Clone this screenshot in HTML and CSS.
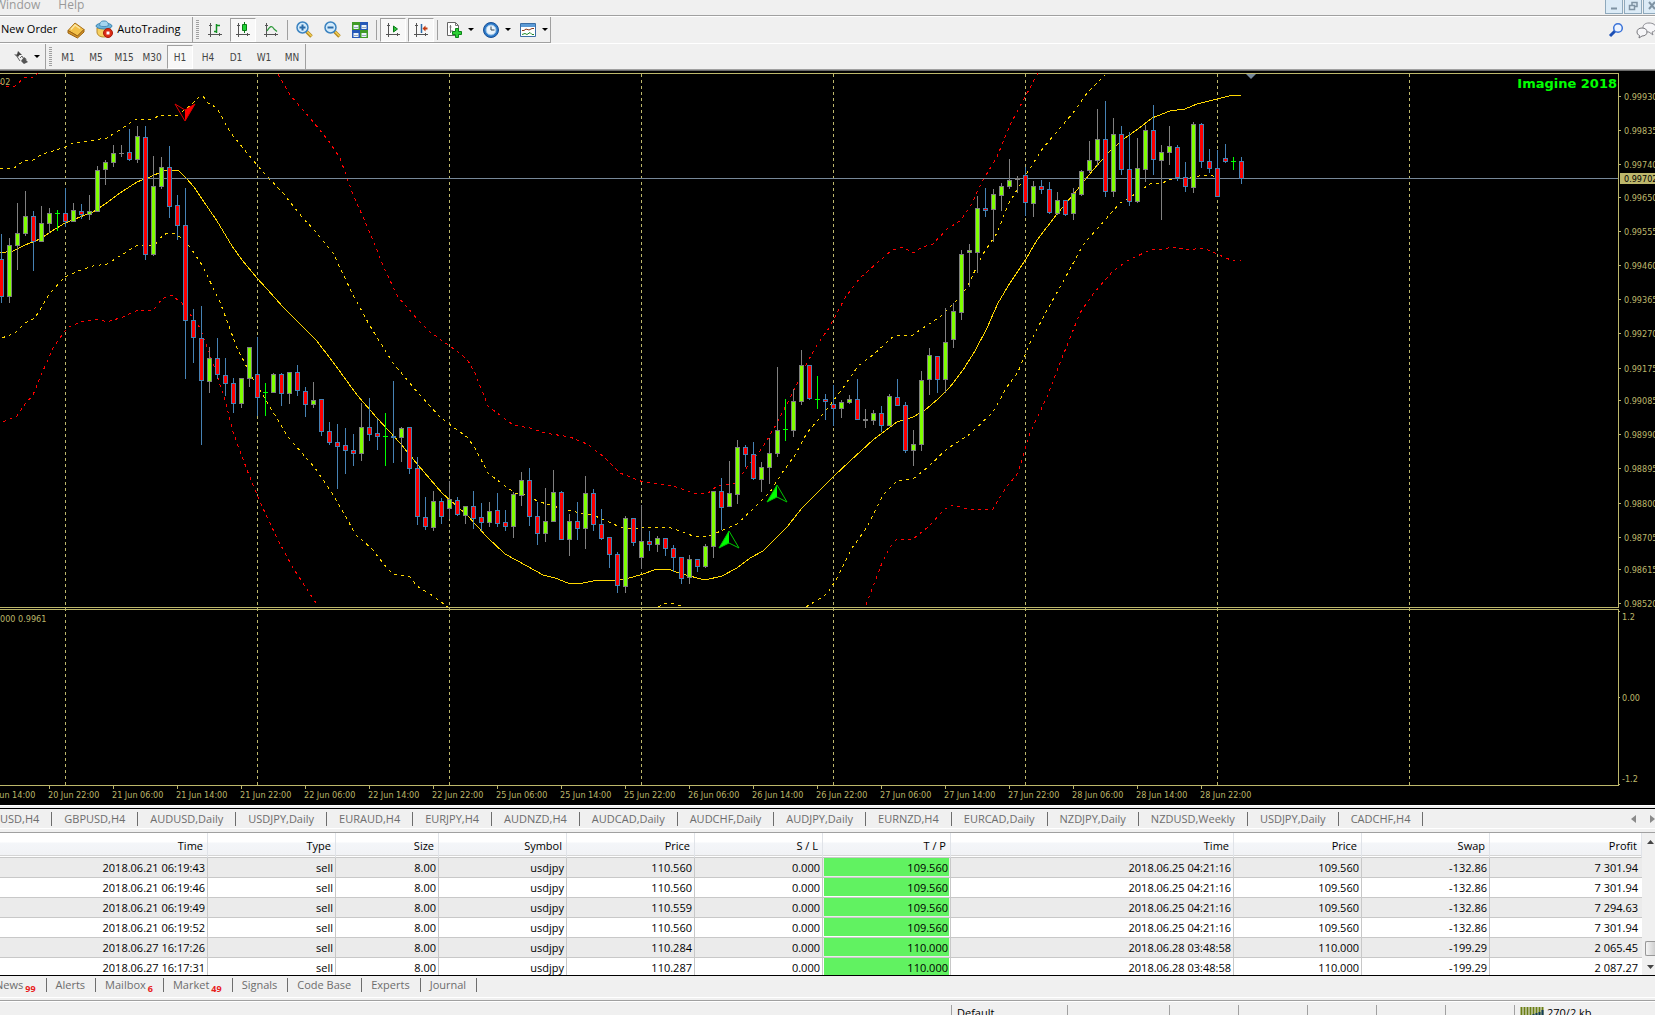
FILE: index.html
```html
<!DOCTYPE html>
<html lang="en">
<head>
    <meta charset="UTF-8">
    <meta name="viewport" content="width=device-width, initial-scale=1.0">
    <title>Trading Terminal</title>
    <link rel="stylesheet" href="styles.css">
</head>
<body>
    <div class="menubar">
        <nav class="menu">
            <button type="button">Window</button>
            <button type="button">Help</button>
        </nav>
        <div class="window-buttons">
            <button type="button" aria-label="Minimize"><svg width="16" height="14"><path d="M5 8.5h6" stroke="#7f93a3" stroke-width="2"/></svg></button>
            <button type="button" aria-label="Restore"><svg width="16" height="14"><path d="M4.500 5.500h5v4h-5zM7 5V2.500h5v4h-2" fill="none" stroke="#7f93a3" stroke-width="1.500"/></svg></button>
            <button type="button" aria-label="Close"><svg width="16" height="14"><path d="M5 2l6 7M11 2l-6 7" stroke="#7f93a3" stroke-width="2"/></svg></button>
        </div>
    </div>

    <div class="toolbars">
        <div class="toolbar">
            <div class="group first">
                <button type="button" class="text-btn">New Order</button>
                <button type="button" class="icon-btn book" aria-label="MetaEditor">
                    <svg width="18" height="18"><path d="M1 9.500L8 2l9 6.500-6.500 6.500z" fill="#f3c14a" stroke="#a8701a"/><path d="M1 9.500v2.500l9.500 5 6.500-6V8.500l-6.500 6.500z" fill="#d9982a" stroke="#9a6210"/><path d="M4 8.500l4-4.500 5 3.500" fill="none" stroke="#fbe6a4" stroke-width="1.500"/></svg>
                </button>
                <button type="button" class="text-btn auto">
                    <svg width="18" height="18"><path d="M2 8h13v4c0 3-3 5-6.500 5S2 15 2 12z" fill="#f6d061" stroke="#b8892a"/><ellipse cx="9" cy="6" rx="8" ry="3" fill="#6db4dd" stroke="#3c85b2"/><path d="M4.500 5.500C5 2 6 1 9 1s4 1 4.500 4.500c-2 1.500-7 1.500-9 0z" fill="#a5d5ef" stroke="#4b91bb"/><circle cx="13" cy="13" r="4.500" fill="#dc2c15" stroke="#a61b0a"/><path d="M11.500 11.500h3v3h-3z" fill="#fff"/></svg>
                    AutoTrading
                </button>
            </div>
            <div class="group">
                <span class="grip"></span>
                <button type="button" class="icon-btn" aria-label="Bar Chart">
                    <svg width="16" height="16"><path d="M3.500 1v14M1 12.500h14M2 3.500h3M12.500 11v3" stroke="#555" fill="none"/><path d="M9.500 2v9M10 3.500h3M7 9.500h2" stroke="#129023" fill="none" stroke-width="1.500"/></svg>
                </button>
                <button type="button" class="icon-btn pressed" aria-label="Candlesticks">
                    <svg width="16" height="16"><path d="M3.500 1v14M1 12.500h14M2 3.500h3M12.500 11v3" stroke="#555" fill="none"/><path d="M9.500 0v11" stroke="#0a7a16"/><path d="M7.500 2.500h4v6h-4z" fill="#1fd235" stroke="#0a7a16"/></svg>
                </button>
                <button type="button" class="icon-btn" aria-label="Line Chart">
                    <svg width="16" height="16"><path d="M3.500 1v14M1 12.500h14M2 3.500h3M12.500 11v3" stroke="#555" fill="none"/><path d="M4 9c3-5 5-6 7-2l3 2.500" stroke="#2f9a3c" fill="none" stroke-width="1.200"/></svg>
                </button>
                <span class="sep"></span>
                <button type="button" class="icon-btn" aria-label="Zoom In">
                    <svg width="17" height="17"><path d="M10.500 10.500l5 5" stroke="#b58a20" stroke-width="3.500"/><path d="M11 10.500l4.500 4.500" stroke="#f2cf55" stroke-width="1.500"/><circle cx="6.500" cy="6.500" r="5.500" fill="#d3ebfb" stroke="#3b83c0" stroke-width="1.500"/><path d="M3.500 6.500h6M6.500 3.500v6" stroke="#2a6ba8" stroke-width="2"/></svg>
                </button>
                <button type="button" class="icon-btn" aria-label="Zoom Out">
                    <svg width="17" height="17"><path d="M10.500 10.500l5 5" stroke="#b58a20" stroke-width="3.500"/><path d="M11 10.500l4.500 4.500" stroke="#f2cf55" stroke-width="1.500"/><circle cx="6.500" cy="6.500" r="5.500" fill="#d3ebfb" stroke="#3b83c0" stroke-width="1.500"/><path d="M3.500 6.500h6" stroke="#2a6ba8" stroke-width="2"/></svg>
                </button>
                <button type="button" class="icon-btn" aria-label="Tile Windows">
                    <svg width="16" height="16"><path d="M0 0h8v8H0zM8 8h8v8H8z" fill="#3f9a26"/><path d="M8 0h8v8H8zM0 8h8v8H0z" fill="#2458b8"/><path d="M1.500 3h5v4h-5zM9.500 3h5v4h-5zM1.500 11h5v4h-5zM9.500 11h5v4h-5z" fill="#eaf3fa"/><path d="M2 5.500h4M10 5.500h4M2 13.500h4M10 13.500h4" stroke="#9ab"/></svg>
                </button>
                <span class="sep"></span>
                <button type="button" class="icon-btn pressed" aria-label="Auto Scroll">
                    <svg width="16" height="16"><path d="M3.500 1v14M1 12.500h14M2 3.500h3M12.500 11v3" stroke="#555" fill="none"/><path d="M8.500 4v6l4-3z" fill="#2cc03a" stroke="#0a7a16"/></svg>
                </button>
                <button type="button" class="icon-btn pressed" aria-label="Chart Shift">
                    <svg width="16" height="16"><path d="M3.500 1v14M1 12.500h14M2 3.500h3M12.500 11v3" stroke="#555" fill="none"/><path d="M8.500 2v9" stroke="#2a6ba8" stroke-width="1.500"/><path d="M9.500 6.500l3-3v2h2v2h-2v2z" fill="#c23c12"/></svg>
                </button>
                <span class="sep"></span>
                <button type="button" class="drop-btn" aria-label="Indicators">
                    <svg width="18" height="18"><path d="M2.500 1.500h8l3 3v10h-11z" fill="#fff" stroke="#666"/><path d="M10.500 1.500v3h3M5.500 4v8M4.500 6h2M5 10h3" fill="none" stroke="#777"/><path d="M10.500 7.500h3v3h3v3h-3v3h-3v-3h-3v-3h3z" fill="#2ccf35" stroke="#0c8418"/></svg>
                    <span class="caret"></span>
                </button>
                <button type="button" class="drop-btn" aria-label="Periods">
                    <svg width="18" height="18"><circle cx="9" cy="9" r="7.500" fill="#2a78c8" stroke="#1a4f94"/><circle cx="9" cy="9" r="5" fill="#eaf4fc" stroke="#9cc4e6"/><path d="M9 5.500V9h3.500" fill="none" stroke="#345"/></svg>
                    <span class="caret"></span>
                </button>
                <button type="button" class="drop-btn" aria-label="Templates">
                    <svg width="18" height="18"><path d="M1.500 2.500h15v13h-15z" fill="#fff" stroke="#3b6ea5"/><path d="M2 3h14v3H2z" fill="#5c9bd6"/><path d="M3 9.500h2l2-1.500 3 1 3-1.500h2" fill="none" stroke="#8a3a1a"/><path d="M3 13.500l3-1 2 1 3-2 2 2h2" fill="none" stroke="#1e8a2a"/></svg>
                    <span class="caret"></span>
                </button>
            </div>
            <div class="tools-right">
                <button type="button" aria-label="Search"><svg width="16" height="16"><path d="M2 14l5-5" stroke="#1c4fb4" stroke-width="3"/><circle cx="10" cy="6" r="4.300" fill="#edf4ff" stroke="#3a72d8" stroke-width="1.500"/></svg></button>
                <button type="button" aria-label="Chat"><svg width="20" height="18"><path d="M13 2c4 0 7 2 7 4.500S18 11 16 11l1 3-4-3c-4 0-6-2-6-4.500S9 2 13 2z" fill="#f6f6f8" stroke="#8a8a90"/><path d="M6 7c3 0 5 1.500 5 4s-2 4-5 4l-3 2 .5-2.500C2 14 1 12.500 1 11c0-2.500 2-4 5-4z" fill="#f6f6f8" stroke="#77777c"/></svg></button>
            </div>
        </div>
        <div class="toolbar">
            <div class="group objects">
                <button type="button" class="drop-btn" aria-label="Arrows">
                    <svg width="16" height="16"><path d="M5 2l4 4H6.500L5 8 1 5.500h3z" fill="#444"/><path d="M3 6l4 6M7 9l2-2 1 2" stroke="#666" fill="none"/><path d="M11 8l3 2.500h-1.500L15 13l-4 2-3-3z" fill="#555"/></svg>
                    <span class="caret"></span>
                </button>
            </div>
            <div class="group periods">
                <span class="grip"></span>
                <button type="button" class="icon-btn">M1</button>
                <button type="button" class="icon-btn">M5</button>
                <button type="button" class="icon-btn">M15</button>
                <button type="button" class="icon-btn">M30</button>
                <button type="button" class="icon-btn pressed">H1</button>
                <button type="button" class="icon-btn">H4</button>
                <button type="button" class="icon-btn">D1</button>
                <button type="button" class="icon-btn">W1</button>
                <button type="button" class="icon-btn">MN</button>
            </div>
        </div>
    </div>

    <main class="chart">
        <svg id="plot" class="plot" role="img" aria-label="Price chart"></svg>
        <svg id="axis" class="axis" role="img" aria-label="Price scale"></svg>
        <div class="signature">Imagine 2018</div>
    </main>

    <div class="chart-tabs">
        <div class="tabs">
            <button type="button">USD,H4</button>
            <button type="button">GBPUSD,H4</button>
            <button type="button">AUDUSD,Daily</button>
            <button type="button">USDJPY,Daily</button>
            <button type="button">EURAUD,H4</button>
            <button type="button">EURJPY,H4</button>
            <button type="button">AUDNZD,H4</button>
            <button type="button">AUDCAD,Daily</button>
            <button type="button">AUDCHF,Daily</button>
            <button type="button">AUDJPY,Daily</button>
            <button type="button">EURNZD,H4</button>
            <button type="button">EURCAD,Daily</button>
            <button type="button">NZDJPY,Daily</button>
            <button type="button">NZDUSD,Weekly</button>
            <button type="button">USDJPY,Daily</button>
            <button type="button">CADCHF,H4</button>
        </div>
        <div class="tab-scroll">
            <button type="button" aria-label="Scroll left"><svg width="5" height="8"><path d="M5 0v8L0 4z" fill="#8a8a8a"/></svg></button>
            <button type="button" aria-label="Scroll right"><svg width="5" height="8"><path d="M0 0v8l5-4z" fill="#8a8a8a"/></svg></button>
        </div>
    </div>

    <section class="terminal">
        <div class="history">
            <table>
                <colgroup>
                    <col class="c-open"><col class="c-std"><col class="c-size"><col class="c-std"><col class="c-std"><col class="c-std"><col class="c-std"><col class="c-close"><col class="c-std"><col class="c-std"><col>
                </colgroup>
                <thead>
                    <tr><th>Time</th><th>Type</th><th>Size</th><th>Symbol</th><th>Price</th><th>S / L</th><th>T / P</th><th>Time</th><th>Price</th><th>Swap</th><th>Profit</th></tr>
                </thead>
                <tbody>
                    <tr><td>2018.06.21 06:19:43</td><td>sell</td><td>8.00</td><td>usdjpy</td><td>110.560</td><td>0.000</td><td class="hit"><span>109.560</span></td><td>2018.06.25 04:21:16</td><td>109.560</td><td>-132.86</td><td>7 301.94</td></tr>
                    <tr><td>2018.06.21 06:19:46</td><td>sell</td><td>8.00</td><td>usdjpy</td><td>110.560</td><td>0.000</td><td class="hit"><span>109.560</span></td><td>2018.06.25 04:21:16</td><td>109.560</td><td>-132.86</td><td>7 301.94</td></tr>
                    <tr><td>2018.06.21 06:19:49</td><td>sell</td><td>8.00</td><td>usdjpy</td><td>110.559</td><td>0.000</td><td class="hit"><span>109.560</span></td><td>2018.06.25 04:21:16</td><td>109.560</td><td>-132.86</td><td>7 294.63</td></tr>
                    <tr><td>2018.06.21 06:19:52</td><td>sell</td><td>8.00</td><td>usdjpy</td><td>110.560</td><td>0.000</td><td class="hit"><span>109.560</span></td><td>2018.06.25 04:21:16</td><td>109.560</td><td>-132.86</td><td>7 301.94</td></tr>
                    <tr><td>2018.06.27 16:17:26</td><td>sell</td><td>8.00</td><td>usdjpy</td><td>110.284</td><td>0.000</td><td class="hit"><span>110.000</span></td><td>2018.06.28 03:48:58</td><td>110.000</td><td>-199.29</td><td>2 065.45</td></tr>
                    <tr><td>2018.06.27 16:17:31</td><td>sell</td><td>8.00</td><td>usdjpy</td><td>110.287</td><td>0.000</td><td class="hit"><span>110.000</span></td><td>2018.06.28 03:48:58</td><td>110.000</td><td>-199.29</td><td>2 087.27</td></tr>
                </tbody>
            </table>
        </div>
        <div class="scrollbar">
            <button type="button" aria-label="Scroll up"><svg width="7" height="4"><path d="M0 4h7L3.500 0z" fill="#444"/></svg></button>
            <span class="thumb"></span>
            <button type="button" aria-label="Scroll down"><svg width="7" height="4"><path d="M0 0h7L3.500 4z" fill="#444"/></svg></button>
        </div>
    </section>

    <div class="terminal-tabs tabs">
        <button type="button">News<span class="count">99</span></button>
        <button type="button">Alerts</button>
        <button type="button">Mailbox<span class="count">6</span></button>
        <button type="button">Market<span class="count">49</span></button>
        <button type="button">Signals</button>
        <button type="button">Code Base</button>
        <button type="button">Experts</button>
        <button type="button">Journal</button>
    </div>

    <footer class="statusbar">
        <span class="profile">Default</span>
        <span class="s-wide"></span>
        <span class="s-std"></span>
        <span class="s-std"></span>
        <span class="s-std"></span>
        <span class="s-std"></span>
        <span class="s-std"></span>
        <span class="traffic">
            <svg width="24" height="14"><path d="M1.500 0v14M4.500 0v14M7.500 0v14M10.500 0v14M13.500 0v14M16.500 0v14M19.500 0v14M22.500 0v14" stroke="#6b7f14" stroke-width="2"/><path d="M7.500 9v5M10.500 8v6M13.500 7v7M16.500 6v8M19.500 5v9M22.500 3v11" stroke="#123c5c" stroke-width="2"/></svg>
            270/2 kb
        </span>
    </footer>

    <script src="chart.js"></script>
</body>
</html>
```
FILE: styles.css
```css
* {
    box-sizing: border-box;
}
body {
    margin: 0;
    height: 100vh;
    overflow: hidden;
    background-color: #f0f0f0;
    color: #000;
    font-family: "Open Sans", "Noto Sans", sans-serif;
    font-size: 11px;
    line-height: 16px;
}
button {
    margin: 0;
    padding: 0;
    border: none;
    background: none;
    color: inherit;
    font: inherit;
    white-space: nowrap;
}
svg {
    display: block;
}

/* menu and toolbars */
.menubar {
    display: flex;
    justify-content: space-between;
    height: 16px;
    border-bottom: 1px solid #a0a0a0;
    overflow: hidden;
}
.menu {
    display: flex;
    align-items: center;
    gap: 18px;
    height: 10px;
    margin-left: -5px;
    color: #999;
    font-size: 12px;
}
.window-buttons {
    display: flex;
    gap: 1px;
    margin-right: -6px;
}
.window-buttons button {
    width: 18px;
    height: 14px;
    border: 1px solid #8fa9bc;
    border-top: none;
    background-color: #dcebf6;
}
.toolbars {
    border-top: 1px solid #fff;
    border-bottom: 1px solid #a0a0a0;
}
.toolbar {
    display: flex;
    height: 26px;
}
.toolbar + .toolbar {
    border-top: 1px solid #fff;
}
.group {
    display: flex;
    align-items: center;
    gap: 2px;
    height: 26px;
    border-right: 1px solid #a0a0a0;
    border-bottom: 1px solid #a0a0a0;
}
.toolbar + .toolbar .group {
    border-bottom: none;
    height: 25px;
}
.group.first {
    width: 193px;
    padding-left: 1px;
    gap: 6px;
}
.text-btn {
    padding-bottom: 2px;
}
.auto {
    display: flex;
    align-items: center;
    gap: 4px;
}
.objects {
    width: 46px;
    padding-left: 9px;
}
.grip {
    width: 3px;
    height: 20px;
    margin: 0 1px 0 3px;
    background: repeating-linear-gradient(#a0a0a0 0 1px, #f0f0f0 1px 2px);
}
.icon-btn {
    display: flex;
    align-items: center;
    justify-content: center;
    width: 26px;
    height: 24px;
}
.pressed {
    border: 1px solid #fff;
    border-top-color: #a0a0a0;
    border-left-color: #a0a0a0;
    background-color: #f8f8f8;
}
.sep {
    width: 1px;
    height: 20px;
    margin: 0 1px;
    background-color: #a0a0a0;
}
.drop-btn {
    display: flex;
    align-items: center;
    gap: 5px;
    width: 35px;
    height: 24px;
    padding-left: 4px;
}
.caret {
    border: 3px solid transparent;
    border-top-color: #000;
    border-bottom: none;
}
.periods {
    color: #444;
    font-family: "DejaVu Sans Condensed", "Open Sans", sans-serif;
    font-size: 10px;
}
.periods .icon-btn {
    padding-top: 2px;
}
.tools-right {
    display: flex;
    align-items: center;
    gap: 12px;
    margin-left: auto;
    margin-right: -1px;
}

/* chart */
.chart {
    position: relative;
    display: flex;
    height: 735px;
    background-color: #000;
}
.plot {
    flex: 1;
    min-width: 0;
    height: 735px;
}
.axis {
    width: 37px;
    height: 735px;
}
.plot text,
.axis text {
    fill: #bdb76b;
    font-family: "DejaVu Sans Condensed", "Open Sans", sans-serif;
    font-size: 9px;
}
.axis text.current {
    fill: #000;
}
.signature {
    position: absolute;
    top: 6px;
    right: 38px;
    color: #0f0;
    font-family: "DejaVu Sans", sans-serif;
    font-size: 13px;
    font-weight: 900;
}

/* tab strips */
.tabs {
    display: flex;
    align-items: center;
    color: #6d6d6d;
}
.tabs button {
    height: 14px;
    padding: 0 12px;
    border-right: 1px solid #6d6d6d;
    line-height: 14px;
}
.tabs button:first-child {
    padding-left: 0;
}
.chart-tabs {
    display: flex;
    justify-content: space-between;
    height: 28px;
    padding: 5px 0 5px;
    border-top: 1px solid #fff;
    border-bottom: 1px solid #a0a0a0;
    background: linear-gradient(#000, #000) 0 2px / 100% 1px no-repeat, linear-gradient(#fff, #fff) 0 22px / 100% 1px no-repeat;
}
.tab-scroll {
    display: flex;
    gap: 14px;
    padding: 3px 0;
}

/* account history */
.terminal {
    display: flex;
    height: 143px;
    border-bottom: 1px solid #000;
}
.history {
    flex: 1;
    overflow: hidden;
    background-color: #fff;
}
table {
    width: 100%;
    table-layout: fixed;
    border-collapse: separate;
    border-spacing: 0;
    text-align: right;
}
.c-open {
    width: 208px;
}
.c-std {
    width: 128px;
}
.c-size {
    width: 103px;
}
.c-close {
    width: 283px;
}
th {
    height: 25px;
    padding: 1px 4px 0 0;
    border-right: 1px solid #e0e3e8;
    border-bottom: 1px solid #c8c8c8;
    background: linear-gradient(#fff 9px, #f4f6f9 10px, #f1f2f5 22px, #d5d5d5 22px, #d5d5d5 23px, #fff 23px);
    font-weight: normal;
}
td {
    height: 20px;
    padding: 0 2px 0 0;
    border-right: 1px solid #c8c8c8;
    border-bottom: 1px solid #c8c8c8;
}
td:last-child {
    padding-right: 4px;
    border-right: none;
}
tbody tr:nth-child(odd) {
    background-color: #ebebeb;
}
td.hit {
    padding: 0 1px;
    vertical-align: top;
}
.hit span {
    display: block;
    height: 18px;
    padding-right: 1px;
    background-color: #61f261;
    line-height: 19px;
}
.scrollbar {
    display: flex;
    flex-direction: column;
    align-items: center;
    width: 13px;
    padding: 7px 0 6px 3px;
    background-color: #f0f0f0;
}
.thumb {
    width: 100%;
    height: 15px;
    margin-top: auto;
    margin-bottom: 9px;
    border: 1px solid #979797;
    border-right: none;
    border-radius: 2px 0 0 2px;
    background: linear-gradient(to right, #f5f5f5, #cfcfcf);
}

/* terminal tabs and status bar */
.terminal-tabs {
    height: 22px;
    padding-bottom: 3px;
    border-bottom: 1px solid #fff;
}
.terminal-tabs button {
    padding: 0 10px 0 9px;
}
.terminal-tabs button:first-child {
    margin-left: -5px;
}
.count {
    display: inline-block;
    height: 8px;
    margin-left: 2px;
    color: #e8201c;
    font-size: 9px;
    font-weight: bold;
    vertical-align: bottom;
    line-height: 9px;
}
.statusbar {
    display: flex;
    justify-content: flex-end;
    height: 24px;
    margin-top: 2px;
    padding-top: 4px;
    border-top: 1px solid #a0a0a0;
    box-shadow: inset 0 1px #fff;
}
.statusbar span {
    height: 18px;
    border-left: 1px solid #a0a0a0;
}
.profile {
    width: 116px;
    padding-left: 5px;
}
.s-wide {
    width: 102px;
}
.s-std {
    flex: 0 0 69px;
}
.statusbar .traffic {
    display: flex;
    gap: 3px;
    width: 141px;
    padding-left: 5px;
}
.traffic svg {
    margin-top: 2px;
}
```
FILE: chart.js
```js
const STEP = 8;
const PLOT_TOP = 3;
const PLOT_BOTTOM = 537;
const SUB_TOP = 539;
const SUB_BOTTOM = 715;

// kind, high, body top, body bottom, low
const candles = `
d 164 189 227 233|u 168 175 227 233|u 133 163 176 200|u 121 146 164 166|d 141 146 172 201|u 136 153 172 172
u 138 143 154 163|x 140 143 143 161|d 118 143 152 157|u 133 140 152 152|d 134 141 145 149|u 125 141 145 150
u 96 100 142 142|u 90 92 100 115|u 75 83 93 97|u 75 83 84 87|d 59 82 90 91|u 56 66 90 93
d 56 67 185 190|u 86 116 185 186|u 87 97 117 119|d 76 97 137 148|d 125 135 156 170|d 118 155 251 309
d 239 250 268 293|d 236 268 311 375|u 277 288 312 323|d 268 288 305 309|d 288 305 314 326|d 308 313 334 343
u 308 308 334 338|u 277 277 309 317|d 267 304 328 346|x 313 322 322 346|u 303 304 323 323|d 303 304 324 336
u 302 302 324 334|d 295 302 321 326|d 317 321 335 347|u 312 330 335 338|d 329 329 362 366|d 352 361 373 375
d 354 372 377 419|d 358 375 381 404|d 364 380 384 396|u 333 357 384 391|d 328 357 365 371|d 349 363 367 380
x 343 366 366 396|d 311 366 368 393|u 357 358 368 392|d 357 357 399 404|d 387 398 447 455|d 427 447 457 460
u 421 431 458 461|d 428 431 447 454|u 411 429 439 449|d 427 430 445 446|u 436 436 446 454|d 421 436 449 459
d 433 447 453 461|u 432 441 453 457|d 423 440 454 457|d 440 452 457 461|u 422 424 457 468|u 402 410 426 436
d 398 410 447 456|d 432 446 464 475|u 418 451 464 472|u 400 422 452 452|d 421 422 470 470|u 444 451 470 486
d 432 451 459 470|u 406 423 459 479|d 419 423 455 461|d 439 454 469 470|d 467 467 485 498|d 482 484 516 523
u 446 448 517 523|d 448 448 473 476|u 435 471 488 499|d 461 471 475 481|u 466 468 475 482|d 468 468 479 486
d 475 478 488 502|d 487 487 509 514|u 485 489 508 514|d 489 489 497 502|u 474 476 497 498|u 421 421 477 488
d 408 421 438 460|u 391 423 437 437|u 370 377 425 434|d 375 377 385 397|d 372 384 409 410|u 392 397 410 422
u 368 383 398 414|u 297 360 384 387|x 329 359 359 371|u 319 331 361 367|u 280 295 332 335|d 295 295 329 330
x 306 329 329 339|d 324 329 332 350|d 315 334 339 356|u 330 332 339 348|u 325 329 333 334|d 309 329 350 350
u 339 349 351 358|u 340 343 351 355|d 336 343 356 362|u 324 326 356 356|d 309 327 336 336|d 332 335 381 383
u 360 374 381 396|u 301 310 375 381|u 278 285 310 325|d 286 286 310 323|u 238 272 310 323|u 233 241 270 278
u 180 184 243 250|u 174 180 183 217|u 126 138 183 203|d 118 138 141 147|u 119 124 140 172|u 113 116 126 141
u 89 110 117 119|u 106 108 110 123|d 97 105 133 146|u 111 116 134 147|d 110 116 120 124|d 112 119 143 144
u 122 130 144 145|d 130 130 145 146|u 118 123 144 150|u 100 101 125 126|u 71 90 101 103|u 39 69 91 96
d 31 69 122 127|u 48 64 122 127|d 56 64 100 105|d 62 99 132 136|u 68 98 132 133|u 55 60 100 112
d 35 60 90 105|u 75 82 91 150|u 56 76 83 95|d 75 77 108 111|d 92 107 117 122|u 52 54 118 123
d 53 54 92 98|d 79 91 99 103|d 80 98 127 127|d 74 88 92 93|x 87 91 91 100|d 87 91 109 114`;

const middle = '0,183 13,181 25,175 40,169 52,161 65,153 80,147 93,142 105,134 120,123 137,112 150,107 163,101 170,100 178,100 186,108 194,117 202,129 217,151 232,176 242,190 257,208 267,219 283,237 300,254 316,270 333,292 357,325 377,348 400,373 418,395 442,423 467,445 487,467 505,484 527,496 543,505 555,508 568,513 578,514 598,510 620,510 633,507 643,504 657,499 668,499 682,504 705,510 722,506 737,498 750,488 763,481 773,471 787,457 802,438 817,423 833,407 850,391 873,370 897,352 913,347 925,340 938,329 950,317 963,300 975,281 987,258 998,233 1010,213 1026,189 1037,170 1057,144 1077,120 1093,100 1110,81 1125,68 1138,59 1152,48 1170,41 1185,39 1197,34 1217,29 1233,25 1241,26';

const innerBands = [
    '0,98 13,99 25,90 33,90 42,84 53,81 65,77 73,73 87,71 107,68 135,50 153,49 160,45 178,45 190,36 200,26 203,26 208,33 217,38 230,62 247,83 263,102 283,123 302,147 315,161 333,183 353,225 370,256 393,293 418,323 440,347 453,357 467,367 475,378 488,403 505,416 515,423 528,425 537,431 550,435 563,439 580,443 593,445 620,457 633,459 650,457 668,457 680,461 693,466 707,467 723,460 737,454 753,439 770,422 782,403 795,385 807,363 827,339 843,318 858,296 873,285 895,265 913,265 920,260 940,247 960,227 967,217 983,184 997,163 1008,135 1027,103 1043,78 1073,43 1087,23 1105,5',
    '2,268 15,263 25,253 35,248 50,223 65,207 78,201 93,196 107,194 123,184 138,175 155,175 160,168 167,163 173,163 180,167 190,177 202,195 220,232 237,278 252,307 267,332 288,367 315,398 332,423 345,445 355,464 372,479 387,498 393,504 410,507 417,516 433,526 448,537',
    '658,537 665,533 673,533 683,537',
    '806,537 827,524 837,508 852,478 867,457 883,425 897,411 913,409 928,397 947,379 970,364 993,342 1007,317 1018,302 1030,273 1047,240 1063,212 1083,175 1105,150 1120,133 1137,123 1150,114 1162,113 1172,109 1190,108 1203,105 1213,106 1220,108 1241,109'
];

const outerBands = [
    '0,13 5,16 15,16 25,7 33,8 38,3',
    '278,4 290,25 310,48 328,70 340,88 352,122 370,163 385,200 398,227 420,252 430,262 447,274 467,289 475,303 488,336 513,355 530,358 545,363 570,367 587,374 603,386 620,403 643,412 673,416 693,423 707,424 717,416 737,413 747,397 763,377 777,353 793,322 807,293 817,275 829,258 845,228 860,208 877,193 892,180 903,177 913,183 922,177 933,174 947,159 960,151 970,137 982,112 997,87 1010,55 1025,27 1038,3',
    '3,352 17,346 25,334 33,325 42,303 53,278 67,258 80,252 97,249 107,252 123,247 138,240 153,241 162,229 171,225 182,233 200,258 213,293 225,330 233,362 247,400 260,432 277,468 293,498 318,536',
    '866,535 882,493 890,477 897,469 913,469 928,457 945,439 953,435 970,440 993,439 1005,419 1018,403 1030,363 1047,327 1060,293 1080,243 1093,224 1113,201 1127,191 1150,180 1162,179 1175,177 1187,180 1203,178 1217,184 1233,191 1241,190'
];

const times = ['20 Jun 14:00', '20 Jun 22:00', '21 Jun 06:00', '21 Jun 14:00', '21 Jun 22:00',
    '22 Jun 06:00', '22 Jun 14:00', '22 Jun 22:00', '25 Jun 06:00', '25 Jun 14:00',
    '25 Jun 22:00', '26 Jun 06:00', '26 Jun 14:00', '26 Jun 22:00', '27 Jun 06:00',
    '27 Jun 14:00', '27 Jun 22:00', '28 Jun 06:00', '28 Jun 14:00', '28 Jun 22:00'];

const prices = [99930, 99835, 99740, 99650, 99555, 99460, 99365, 99270, 99175,
    99085, 98990, 98895, 98800, 98705, 98615, 98520];

const KHAKI = '#bdb76b';

function rect(x, y, w, h, fill) {
    return `<rect x="${x}" y="${y}" width="${w}" height="${h}" fill="${fill}"/>`;
}

function line(points, color, dash) {
    return `<polyline points="${points}" fill="none" stroke="${color}" stroke-dasharray="${dash}"/>`;
}

function candle(row, i) {
    const [kind, ...values] = row.split(' ');
    const [high, top, bottom, low] = values.map(Number);
    const x = 1 + i * STEP;
    const edge = { u: '#808080', d: '#4682b4', x: '#00ff00' }[kind];
    const height = Math.max(1, bottom - top);
    let out = rect(x, high, 1, low - high, edge) + rect(x - 2, top, 5, height, edge);
    if (height > 2) {
        out += rect(x - 1, top + 1, 3, height - 2, kind === 'u' ? '#7fff00' : '#ff0000');
    }
    return out;
}

function upArrow(x, y) {
    return `<path d="M${x} ${y}l-10 17 10-5z" fill="#00ff00"/>` +
        `<path d="M${x} ${y}l-10 17 10-5 10 5z" fill="none" stroke="#00c800"/>`;
}

function drawPlot() {
    let out = '<g shape-rendering="crispEdges">';
    out += rect(0, 0, '100%', 1, '#696969');
    out += rect(0, PLOT_TOP, '100%', 1, KHAKI);
    out += rect(0, PLOT_BOTTOM, '100%', 1, KHAKI);
    out += rect(0, SUB_TOP, '100%', 1, KHAKI);
    out += rect(0, SUB_BOTTOM, '100%', 1, KHAKI);

    // day separators
    for (let x = 65; x < 1600; x += 192) {
        out += `<path d="M${x + .5} ${PLOT_TOP + 1}V${SUB_BOTTOM}" stroke="${KHAKI}" stroke-dasharray="3 3"/>`;
    }
    outerBands.forEach(points => out += line(points, '#ff0000', '3 4'));
    innerBands.forEach(points => out += line(points, '#ffd700', '3 4'));
    out += line(middle, '#ffd700', 'none');
    out += rect(0, 108, '100%', 1, '#778899');
    out += candles.trim().split(/[|\n]/).map(candle).join('');
    times.forEach((label, i) => out += rect(64 * i - 15, SUB_BOTTOM, 1, 4, KHAKI));
    out += '</g>';

    times.forEach((label, i) => out += `<text x="${64 * i - 16}" y="728">${label}</text>`);
    out += '<text x="0" y="15">02</text><text x="0" y="552">000 0.9961</text>';

    // trade signals
    out += '<path d="M185 51V40l10-6z" fill="#ff0000"/><path d="M175 34l10 6 10-6-10 17z" fill="none" stroke="#e00000"/>';
    out += upArrow(729, 461) + upArrow(777, 415);
    out += '<path d="M1246 4h10l-5 5z" fill="#778899"/>';
    document.getElementById('plot').innerHTML = out;
}

function drawAxis() {
    let out = rect(0, 0, '100%', 1, '#696969');
    out += rect(0, PLOT_TOP, 1, PLOT_BOTTOM - PLOT_TOP + 1, KHAKI);
    out += rect(0, SUB_TOP, 1, SUB_BOTTOM - SUB_TOP + 1, KHAKI);
    prices.forEach(price => {
        const y = Math.round(26 + (99930 - price) * 0.3598);
        out += rect(0, y, 3, 1, KHAKI) + `<text x="6" y="${y + 4}">0.${price}</text>`;
    });
    [['1.2', 541, 550], ['0.00', 627, 631], ['-1.2', 714, 712]].forEach(([label, tick, y]) => {
        out += rect(0, tick, 2, 1, KHAKI) + `<text x="4" y="${y}">${label}</text>`;
    });
    out += rect(2, 103, 35, 11, KHAKI) + '<text class="current" x="6" y="112">0.99702</text>';
    document.getElementById('axis').innerHTML = out;
}

drawPlot();
drawAxis();
```
